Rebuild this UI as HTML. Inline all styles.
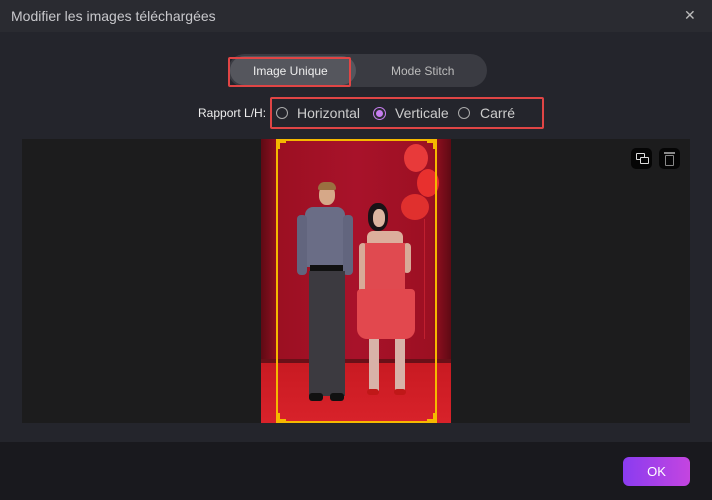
<!DOCTYPE html>
<html><head><meta charset="utf-8"><style>
*{margin:0;padding:0;box-sizing:border-box}
body{width:712px;height:500px;background:#24252c;font-family:"Liberation Sans",sans-serif;position:relative;overflow:hidden;color:#ddd}
.a{position:absolute}
</style></head><body>
<div class="a" style="left:0;top:0;width:712px;height:32px;background:#2a2b31"></div>
<div class="a" style="left:11px;top:8px;font-size:14px;color:#c8c8cc">Modifier les images téléchargées</div>
<div class="a" style="left:684px;top:7px;font-size:14px;color:#bbb">✕</div>

<div class="a" style="left:228px;top:54px;width:259px;height:33px;border-radius:17px;background:#3a3b42"></div>
<div class="a" style="left:230px;top:56px;width:126px;height:29px;border-radius:15px;background:#55565d"></div>
<div class="a" style="left:228px;top:57px;width:123px;height:30px;border:2px solid #e04545;border-radius:2px"></div>
<div class="a" style="left:253px;top:64px;font-size:12px;color:#eee">Image Unique</div>
<div class="a" style="left:391px;top:64px;font-size:12px;color:#bbb">Mode Stitch</div>

<div class="a" style="left:198px;top:106px;font-size:12px;color:#eee">Rapport L/H:</div>
<div class="a" style="left:270px;top:97px;width:274px;height:32px;border:2px solid #e04545;border-radius:2px"></div>
<div class="a" style="left:276px;top:107px;width:12px;height:12px;border:1px solid #aaa;border-radius:50%"></div>
<div class="a" style="left:297px;top:105px;font-size:14px;color:#ccc">Horizontal</div>
<div class="a" style="left:373px;top:107px;width:13px;height:13px;border:1px solid #c77ef0;border-radius:50%;background:#2a2b31"><div class="a" style="left:2px;top:2px;width:7px;height:7px;border-radius:50%;background:#c77ef0"></div></div>
<div class="a" style="left:395px;top:105px;font-size:14px;color:#ccc">Verticale</div>
<div class="a" style="left:458px;top:107px;width:12px;height:12px;border:1px solid #aaa;border-radius:50%"></div>
<div class="a" style="left:480px;top:105px;font-size:14px;color:#ccc">Carré</div>

<div class="a" style="left:22px;top:139px;width:668px;height:284px;background:#1c1c1d"></div>
<div class="a" style="left:631px;top:148px;width:21px;height:21px;border-radius:5px;background:#050505"></div>
<div class="a" style="left:636px;top:153px;width:9px;height:7px;border:1.5px solid #ddd;border-radius:1px"></div>
<div class="a" style="left:640px;top:157px;width:9px;height:7px;border:1.5px solid #ddd;border-radius:1px;background:#050505"></div>
<div class="a" style="left:659px;top:148px;width:21px;height:21px;border-radius:5px;background:#050505"></div>
<div class="a" style="left:664px;top:152px;width:11px;height:2px;background:#888"></div>
<div class="a" style="left:665px;top:155px;width:9px;height:11px;border:1.5px solid #888;border-radius:1px"></div>

<!-- photo -->
<div class="a" style="left:261px;top:139px;width:190px;height:284px;background:linear-gradient(90deg,#5e0a14,#9c1022 10%,#a8122a 50%,#9c1022 90%,#5e0a14);overflow:hidden">
  <div class="a" style="left:0;top:223px;width:190px;height:61px;background:linear-gradient(#c81a22,#d8222a)"></div>
  <div class="a" style="left:0;top:220px;width:190px;height:4px;background:#6a1018"></div>
  <!-- balloons -->
  <div class="a" style="left:143px;top:5px;width:24px;height:28px;border-radius:50%;background:#e83a3a"></div>
  <div class="a" style="left:156px;top:30px;width:22px;height:28px;border-radius:50%;background:#e8302e"></div>
  <div class="a" style="left:140px;top:55px;width:28px;height:26px;border-radius:50%;background:#e0302e"></div>
  <div class="a" style="left:163px;top:80px;width:1px;height:120px;background:#c02030"></div>
  <!-- man -->
  <div class="a" style="left:58px;top:46px;width:16px;height:20px;border-radius:45%;background:#d6a888"></div>
  <div class="a" style="left:57px;top:43px;width:18px;height:8px;border-radius:8px 8px 2px 2px;background:#9a7040"></div>
  <div class="a" style="left:44px;top:68px;width:40px;height:60px;border-radius:8px 8px 2px 2px;background:#6a6d86"></div>
  <div class="a" style="left:36px;top:76px;width:10px;height:60px;border-radius:4px;background:#62657e"></div>
  <div class="a" style="left:82px;top:76px;width:10px;height:60px;border-radius:4px;background:#62657e"></div>
  <div class="a" style="left:49px;top:126px;width:33px;height:6px;background:#111"></div>
  <div class="a" style="left:48px;top:132px;width:36px;height:125px;background:#3c3a40"></div>
  <div class="a" style="left:48px;top:254px;width:14px;height:8px;border-radius:3px;background:#111"></div>
  <div class="a" style="left:69px;top:254px;width:14px;height:8px;border-radius:3px;background:#111"></div>
  <!-- woman -->
  <div class="a" style="left:107px;top:64px;width:20px;height:28px;border-radius:45%;background:#1a1216"></div>
  <div class="a" style="left:112px;top:70px;width:12px;height:18px;border-radius:45%;background:#dcb4a0"></div>
  <div class="a" style="left:106px;top:92px;width:36px;height:14px;border-radius:6px 6px 0 0;background:#dcae9c"></div>
  <div class="a" style="left:98px;top:104px;width:8px;height:60px;border-radius:4px;background:#d8aa98"></div>
  <div class="a" style="left:142px;top:104px;width:8px;height:30px;border-radius:4px;background:#d8aa98"></div>
  <div class="a" style="left:104px;top:104px;width:40px;height:48px;background:#e04a50"></div>
  <div class="a" style="left:96px;top:150px;width:58px;height:50px;border-radius:4px 4px 10px 10px;background:#e2484e"></div>
  <div class="a" style="left:108px;top:200px;width:10px;height:52px;background:#d8b2a8"></div>
  <div class="a" style="left:134px;top:200px;width:10px;height:52px;background:#d8b2a8"></div>
  <div class="a" style="left:106px;top:250px;width:12px;height:6px;border-radius:3px;background:#c01818"></div>
  <div class="a" style="left:133px;top:250px;width:12px;height:6px;border-radius:3px;background:#c01818"></div>
</div>
<div class="a" style="left:276px;top:139px;width:161px;height:284px;border:2px solid #f5b800"></div>
<div class="a" style="left:276px;top:139px;width:10px;height:10px;border-left:4px solid #f5b800;border-top:4px solid #f5b800"></div>
<div class="a" style="left:427px;top:139px;width:10px;height:10px;border-right:4px solid #f5b800;border-top:4px solid #f5b800"></div>
<div class="a" style="left:276px;top:413px;width:10px;height:10px;border-left:4px solid #f5b800;border-bottom:4px solid #f5b800"></div>
<div class="a" style="left:427px;top:413px;width:10px;height:10px;border-right:4px solid #f5b800;border-bottom:4px solid #f5b800"></div>

<div class="a" style="left:0;top:442px;width:712px;height:58px;background:#19191e"></div>
<div class="a" style="left:623px;top:457px;width:67px;height:29px;border-radius:6px;background:linear-gradient(90deg,#8a3cf0,#c445e0);color:#fff;font-size:13px;text-align:center;line-height:29px">OK</div>
</body></html>
